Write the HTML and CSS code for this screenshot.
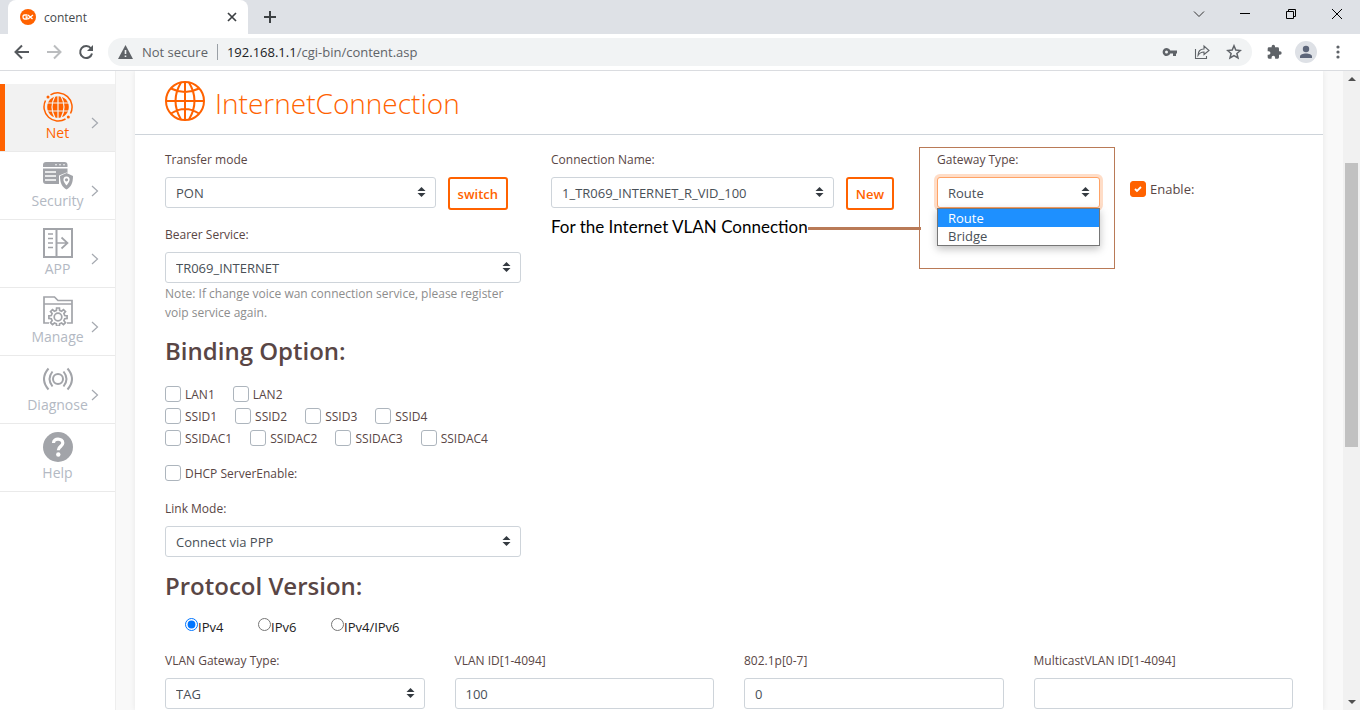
FILE: index.html
```html
<!DOCTYPE html>
<html lang="en">
<head>
<meta charset="utf-8">
<title>content</title>
<link rel="stylesheet" href="styles.css">
</head>
<body>
<svg class="defs" aria-hidden="true">
  <symbol id="carets" viewBox="0 0 8 10"><path d="M4 0L8 4H0zM4 10L0 6H8z" fill="#343a40"/></symbol>
  <symbol id="arrow" viewBox="0 0 8 12"><path d="M1 1l5.500 5L1 11" fill="none" stroke="#a5a9b0" stroke-width="1.200"/></symbol>
</svg>
<div class="browser">
  <div class="tabstrip">
    <div class="tab">
      <svg class="favicon" viewBox="0 0 16 16"><circle cx="8" cy="8" r="8" fill="#ff6200"/><path d="M7.500 6H4.500Q3 6 3 8t1.500 2H7V8H5.500M8 6l4.500 4M13 6l-5 4" fill="none" stroke="#fff" stroke-width="1.300"/></svg>
      <span class="tab-title">content</span>
      <button class="icon-btn" aria-label="Close tab"><svg width="10" height="10" viewBox="0 0 10 10"><path d="M1 1l8 8M9 1L1 9" stroke="#3c4043" stroke-width="1.700"/></svg></button>
    </div>
    <button class="icon-btn new-tab" aria-label="New tab"><svg width="12" height="12" viewBox="0 0 12 12"><path d="M6 0v12M0 6h12" stroke="#3c4043" stroke-width="2"/></svg></button>
    <div class="window-controls">
      <button class="icon-btn" aria-label="Search tabs"><svg width="12" height="12" viewBox="0 0 12 12"><path d="M1 3.500l5 5 5-5" fill="none" stroke="#333" stroke-width="1"/></svg></button>
      <button class="icon-btn" aria-label="Minimize"><svg width="12" height="12" viewBox="0 0 12 12"><path d="M1 5.500h10" stroke="#000"/></svg></button>
      <button class="icon-btn" aria-label="Restore"><svg width="12" height="12" viewBox="0 0 12 12"><path d="M1.500 3.500h7v7h-7zM3.500 3.500v-2h7v7h-2" fill="none" stroke="#000"/></svg></button>
      <button class="icon-btn" aria-label="Close"><svg width="12" height="12" viewBox="0 0 12 12"><path d="M1 1l10 10M11 1L1 11" stroke="#000" stroke-width="1"/></svg></button>
    </div>
  </div>
  <div class="toolbar">
    <button class="icon-btn" aria-label="Back"><svg width="16" height="16" viewBox="0 0 16 16"><path d="M15 8H2M8 1.500L1.500 8 8 14.500" fill="none" stroke="#55595d" stroke-width="2"/></svg></button>
    <button class="icon-btn" aria-label="Forward"><svg width="16" height="16" viewBox="0 0 16 16"><path d="M1 8h13M8 1.500L14.500 8 8 14.500" fill="none" stroke="#bbbdbf" stroke-width="2"/></svg></button>
    <button class="icon-btn" aria-label="Reload"><svg width="16" height="16" viewBox="0 0 16 16"><path d="M13 4.500A6 6 0 1 0 14 9.500" fill="none" stroke="#55595d" stroke-width="2"/><path d="M15 1v6H9z" fill="#55595d"/></svg></button>
    <div class="omnibox">
      <svg width="15" height="14" viewBox="0 0 15 14"><path d="M7.500 0L15 14H0z" fill="#5f6368"/><path d="M7.500 5v4M7.500 10.500v1.500" stroke="#f1f3f4" stroke-width="1.600"/></svg>
      <span class="not-secure">Not secure</span>
      <span class="address"><span class="host">192.168.1.1</span>/cgi-bin/content.asp</span>
      <button class="icon-btn" aria-label="Passwords"><svg width="16" height="16" viewBox="0 0 16 16"><path fill-rule="evenodd" d="M8.300 6.500H15v3h-1V12h-3V9.500H8.300A4 4 0 1 1 8.300 6.500zM4.500 6.500a1.500 1.500 0 1 0 0 3 1.500 1.500 0 0 0 0-3z" fill="#5f6368"/></svg></button>
      <button class="icon-btn" aria-label="Share"><svg width="16" height="16" viewBox="0 0 16 16"><path d="M1.500 5v9.500h11V12M4 11.500C4 7 6.500 5 10 5V2l5 4.500-5 4V8C7.500 8 5.500 9 4 11.500z" fill="none" stroke="#5f6368" stroke-width="1.100"/></svg></button>
      <button class="icon-btn" aria-label="Bookmark"><svg width="16" height="16" viewBox="0 0 16 16"><path d="M8 1.800l1.800 4.300 4.600.4-3.500 3 1.100 4.500L8 11.600 4 14l1.100-4.500-3.500-3 4.600-.4z" fill="none" stroke="#5f6368" stroke-width="1.500"/></svg></button>
    </div>
    <div class="actions">
      <button class="icon-btn" aria-label="Extensions"><svg width="16" height="16" viewBox="0 0 24 24"><path d="M21 11h-1.500V7a2 2 0 0 0-2-2h-4V3.500a2.500 2.500 0 0 0-5 0V5h-4a2 2 0 0 0-2 2v3.800H4a2.700 2.700 0 0 1 0 5.400H2.500V20a2 2 0 0 0 2 2h3.800v-1.500a2.700 2.700 0 0 1 5.400 0V22h3.800a2 2 0 0 0 2-2v-4H21a2.500 2.500 0 0 0 0-5z" fill="#5f6368"/></svg></button>
      <button class="icon-btn" aria-label="Profile"><svg width="22" height="22" viewBox="0 0 22 22"><circle cx="11" cy="11" r="11" fill="#dee1e6"/><circle cx="11" cy="8" r="3.200" fill="#5c6579"/><path d="M5 17v-1.500c0-4 12-4 12 0V17z" fill="#5c6579"/></svg></button>
      <button class="icon-btn menu-btn" aria-label="Menu"><svg width="4" height="14" viewBox="0 0 4 14"><g fill="#5f6368"><circle cx="2" cy="2" r="1.600"/><circle cx="2" cy="7" r="1.600"/><circle cx="2" cy="12" r="1.600"/></g></svg></button>
    </div>
  </div>
  <div class="viewport">
    <nav class="sidebar">
      <a class="nav-item active" href="#net">
        <svg class="nav-icon" viewBox="0 0 30 30"><g fill="none" stroke="#ff6200" stroke-width="1.500"><path d="M7.500 2.900A14.200 14.200 0 0 1 27.500 21.500M22.500 27A14.200 14.200 0 0 1 2.500 8.500"/></g><circle cx="5" cy="5" r="1.500" fill="#ff6200"/><circle cx="25.300" cy="25" r="1.500" fill="#ff6200"/><circle cx="15" cy="15" r="10.800" fill="#ff6200"/><path d="M3.500 11h23M3.500 19h23M15 3v24M12 4q-6 11 0 22M18 4q6 11 0 22" fill="none" stroke="#f2f2f2" stroke-width="1.200"/></svg>
        <span>Net</span><svg class="nav-arrow"><use href="#arrow"/></svg></a>
      <a class="nav-item" href="#security">
        <svg class="nav-icon" viewBox="0 0 30 30"><path d="M3 2h18.500a3 3 0 0 1 3 3v2H0V5a3 3 0 0 1 3-3z" fill="#a2a4a9"/><g fill="#fff"><circle cx="13" cy="4.800" r=".8"/><circle cx="17" cy="4.800" r=".8"/><circle cx="21" cy="4.800" r=".8"/></g><path d="M0 8.500h24.500V13l-1-.5-7.500 3V24H3a3 3 0 0 1-3-3z" fill="#a2a4a9"/><path d="M2 12h11M2 16h11M2 20h11" stroke="#fff" stroke-width="1.300"/><path d="M23.500 13L30 16c0 7-2 11-6.500 13.500C19 27 17 23 17 16z" fill="#a2a4a9"/><path d="M23.500 16.500c2.500 0 3.500 2 3 4-.5 2-3 5-3 5s-2.500-3-3-5c-.5-2 .5-4 3-4z" fill="#fff"/><circle cx="23.500" cy="19.800" r="1.600" fill="#a2a4a9"/></svg>
        <span>Security</span><svg class="nav-arrow"><use href="#arrow"/></svg></a>
      <a class="nav-item" href="#app">
        <svg class="nav-icon" viewBox="0 0 30 30"><path d="M1 1h28v28H1zM13.500 1v28" fill="none" stroke="#a2a4a9" stroke-width="2"/><path d="M5 6h5M5 10.500h5M5 15h5M5 19.500h5M14 15h10M18.500 9.500L24.500 15l-6 5.500" fill="none" stroke="#a2a4a9" stroke-width="1.700"/></svg>
        <span>APP</span><svg class="nav-arrow"><use href="#arrow"/></svg></a>
      <a class="nav-item" href="#manage">
        <svg class="nav-icon" viewBox="0 0 30 30"><path d="M6 27H1V1h10.500l3.500 3.500h14V27h-5M1 8h28" fill="none" stroke="#a2a4a9" stroke-width="1.700"/><g fill="none" stroke="#a2a4a9" stroke-width="1.700"><path d="M13.400 14.400L13.600 12h2.800l.2 2.400 2 .8 1.900-1.600 2 2-1.600 1.900.8 2 2.400.3v2.600l-2.400.3-.8 2 1.600 1.900-2 2-1.900-1.600-2 .8-.2 2.200h-2.800l-.2-2.200-2-.8-1.900 1.600-2-2 1.600-1.900-.8-2-2.400-.3v-2.600l2.400-.3.8-2-1.600-1.900 2-2 1.900 1.600z"/><circle cx="15" cy="21" r="3.800"/></g></svg>
        <span>Manage</span><svg class="nav-arrow"><use href="#arrow"/></svg></a>
      <a class="nav-item" href="#diagnose">
        <svg class="nav-icon" viewBox="0 0 30 30"><g fill="none" stroke="#a2a4a9" stroke-width="2"><circle cx="15" cy="15" r="5"/><path d="M9.500 7.500q-6 7.500 0 15M20.500 7.500q6 7.500 0 15M5.500 4.500q-9 10.500 0 21M24.500 4.500q9 10.500 0 21"/></g></svg>
        <span>Diagnose</span><svg class="nav-arrow"><use href="#arrow"/></svg></a>
      <a class="nav-item" href="#help">
        <svg class="nav-icon" viewBox="0 0 30 30"><circle cx="15" cy="15" r="15" fill="#a2a4a9"/><path d="M10.500 11c0-5.500 9.300-5 9.300 0 0 3.500-4.500 3.300-4.500 7.300" fill="none" stroke="#fff" stroke-width="3.200"/><circle cx="15.300" cy="22.500" r="2.200" fill="#fff"/></svg>
        <span>Help</span></a>
    </nav>
    <main class="page">
      <section class="panel">
        <header class="panel-head">
          <svg class="globe" viewBox="0 0 40 40"><g fill="none" stroke="#ff6200" stroke-width="2"><circle cx="20" cy="20" r="19"/><path d="M20 1v38M1 20h38M16 1.500q-11 18.500 0 37M24 1.500q11 18.500 0 37M6 7.500q14 7 28 0M6 32.500q14-9 28 0"/></g></svg>
          <h1>InternetConnection</h1>
        </header>
        <form class="form">
          <div class="grid">
            <div class="col-4">
              <div class="field">
                <label for="mode">Transfer mode</label>
                <div class="control-row">
                  <div class="select"><select id="mode"><option>PON</option></select><svg><use href="#carets"/></svg></div>
                  <button type="button" class="btn">switch</button>
                </div>
              </div>
              <div class="field spaced">
                <label for="bearer">Bearer Service:</label>
                <div class="select"><select id="bearer"><option>TR069_INTERNET</option></select><svg><use href="#carets"/></svg></div>
                <p class="note">Note: If change voice wan connection service, please register voip service again.</p>
              </div>
              <h2>Binding Option:</h2>
              <div class="checks">
                <div class="check-row">
                  <label><input type="checkbox">LAN1</label><label><input type="checkbox">LAN2</label>
                </div>
                <div class="check-row">
                  <label><input type="checkbox">SSID1</label><label><input type="checkbox">SSID2</label><label><input type="checkbox">SSID3</label><label><input type="checkbox">SSID4</label>
                </div>
                <div class="check-row">
                  <label><input type="checkbox">SSIDAC1</label><label><input type="checkbox">SSIDAC2</label><label><input type="checkbox">SSIDAC3</label><label><input type="checkbox">SSIDAC4</label>
                </div>
              </div>
              <div class="check-row dhcp"><label><input type="checkbox">DHCP ServerEnable:</label></div>
              <div class="field">
                <label for="link">Link Mode:</label>
                <div class="select"><select id="link"><option>Connect via PPP</option></select><svg><use href="#carets"/></svg></div>
              </div>
            </div>
            <div class="col-4">
              <div class="field">
                <label for="conn">Connection Name:</label>
                <div class="control-row">
                  <div class="select"><select id="conn"><option>1_TR069_INTERNET_R_VID_100</option></select><svg><use href="#carets"/></svg></div>
                  <button type="button" class="btn">New</button>
                </div>
              </div>
              <div class="callout"><span>For the Internet VLAN Connection</span></div>
            </div>
            <div class="col-2 gateway">
              <div class="field">
                <label for="gateway">Gateway Type:</label>
                <div class="select open"><select id="gateway"><option>Route</option><option>Bridge</option></select><svg><use href="#carets"/></svg>
                  <ul class="menu" role="listbox" aria-label="Gateway Type"><li role="option" aria-selected="true">Route</li><li role="option" aria-selected="false">Bridge</li></ul>
                </div>
              </div>
            </div>
            <div class="col-2 check-row enable"><label><input type="checkbox" checked>Enable:</label></div>
          </div>
          <h2>Protocol Version:</h2>
          <div class="radios">
            <label><input type="radio" name="ip" checked><span>IPv4</span></label>
            <label><input type="radio" name="ip"><span>IPv6</span></label>
            <label><input type="radio" name="ip"><span>IPv4/IPv6</span></label>
          </div>
          <div class="grid">
            <div class="col-3 field"><label for="vtype">VLAN Gateway Type:</label>
              <div class="select"><select id="vtype"><option>TAG</option></select><svg><use href="#carets"/></svg></div></div>
            <div class="col-3 field"><label for="vid">VLAN ID[1-4094]</label><input class="text" id="vid" type="text" value="100"></div>
            <div class="col-3 field"><label for="prio">802.1p[0-7]</label><input class="text" id="prio" type="text" value="0"></div>
            <div class="col-3 field"><label for="mvid">MulticastVLAN ID[1-4094]</label><input class="text" id="mvid" type="text"></div>
          </div>
        </form>
      </section>
    </main>
    <div class="scrollbar" aria-hidden="true">
      <svg width="8" height="5" viewBox="0 0 8 5"><path d="M4 0l4 4H0z" fill="#505050"/></svg>
      <div class="track"><div class="thumb"></div></div>
      <svg width="8" height="5" viewBox="0 0 8 5"><path d="M4 5l4-4H0z" fill="#505050"/></svg>
    </div>
  </div>
</div>
</body>
</html>
```
FILE: styles.css
```css
* { box-sizing: border-box; }
body {
  margin: 0;
  font: 13px/19px "Open Sans", "Noto Sans", sans-serif;
  color: #594645;
}
.defs { display: none; }
svg { display: block; flex: none; }
button, input, select { font: inherit; margin: 0; }
.browser { display: flex; flex-direction: column; height: 100vh; overflow: hidden; }
.icon-btn { display: flex; align-items: center; justify-content: center; border: 0; padding: 0; background: none; }

.tabstrip { display: flex; align-items: center; height: 34px; flex: none; background: #dee1e6; padding-left: 8px; }
.tab {
  display: flex; align-items: center; gap: 8px; width: 240px; height: 34px;
  padding: 0 11px 0 12px; background: #fff; border-radius: 8px 8px 0 0;
  font-size: 12px; color: #45494d;
}
.favicon { width: 16px; height: 16px; }
.tab-title { flex: 1; }
.new-tab { margin-left: 16px; }
.window-controls { display: flex; align-self: flex-start; margin-left: auto; }
.window-controls .icon-btn { width: 46px; height: 28px; }

.toolbar {
  display: flex; align-items: center; gap: 16px; height: 37px; flex: none;
  padding: 0 14px; background: #fff; border-bottom: 1px solid #dadce0;
}
.omnibox {
  display: flex; align-items: center; flex: 1; height: 28px; padding: 0 10px;
  margin: 0 -2px; border-radius: 14px; background: #f1f3f4; font-size: 13px; color: #5f6368;
}
.omnibox .icon-btn { margin-left: 16px; }
.not-secure { padding: 0 9px; border-right: 1px solid #9aa0a6; line-height: 16px; }
.address { flex: 1; padding-left: 9px; }
.host { color: #202124; }
.actions { display: flex; align-items: center; gap: 13px; }
.menu-btn { width: 16px; }

.viewport { display: flex; flex: 1; min-height: 0; background: #f9f9f9; }
.sidebar { width: 116px; flex: none; padding-top: 13px; background: #fff; border-right: 1px solid #eee; }
.nav-item {
  position: relative; display: flex; flex-direction: column; align-items: center; height: 68px;
  padding-top: 8px; border-bottom: 1px solid #eaeaea; color: #b3b9c3; font-size: 14px; line-height: 22px; text-decoration: none;
}
.nav-item.active { background: #f2f2f2; box-shadow: inset 5px 0 #ff6200; color: #ff6200; }
.nav-icon { width: 30px; height: 30px; }
.nav-arrow { position: absolute; right: 16px; top: 33px; width: 8px; height: 12px; }

.page { flex: 1; padding: 0 20px 0 19px; min-width: 0; }
.panel { height: 100%; background: #fff; box-shadow: 0 0 6px rgba(0, 0, 0, .08); clip-path: inset(0 -6px); }
.panel-head { display: flex; align-items: center; gap: 10px; height: 64px; padding: 0 30px 4px; border-bottom: 1px solid #ced4da; }
.globe { width: 40px; height: 40px; }
h1 { margin: 4px 0 0; font-size: 28px; line-height: 36px; font-weight: 300; color: #ff6200; }
.form { padding: 15px 30px 0; }
.grid { display: grid; grid-template-columns: repeat(12, minmax(0, 1fr)); column-gap: 30px; }
.col-4 { grid-column: span 4; }
.col-3 { grid-column: span 3; }
.col-2 { grid-column: span 2; }
.field { display: flex; flex-direction: column; }
.field > label { margin-bottom: 8px; font-size: 12px; }
.spaced { margin-top: 17px; }
.control-row { display: flex; gap: 12px; height: 31px; }
.control-row .select { flex: 1; }
.control-row .btn { margin-right: 13px; }
.select { position: relative; }
.select select, .text {
  display: block; width: 100%; height: 31px; padding: 1px 10px 0; border: 1px solid #ced4da; border-radius: 3px;
  background: #fff; color: #495057; appearance: none; outline: 0;
}
.select > svg { position: absolute; right: 10px; top: 10px; width: 9px; height: 10px; }
.btn { height: 33px; padding: 2px 8px 0; border: 2px solid #ff6200; border-radius: 3px; background: #fff; color: #ff6200; font-weight: 600; }
.note { margin: 1px 0 0; font-size: 12px; color: #8d8d8d; }
h2 { margin: 15px 0 18px; font-size: 24px; line-height: 28px; font-weight: 600; }
.check-row { display: flex; gap: 18px; height: 22px; align-items: center; font-size: 12px; }
.check-row label { display: flex; align-items: center; gap: 4px; }
.check-row input { width: 16px; height: 16px; border: 1px solid #adb5bd; border-radius: 3px; background: #fff; appearance: none; }
.check-row input:checked {
  border-color: #ff6200;
  background: url("data:image/svg+xml,%3Csvg xmlns='http://www.w3.org/2000/svg' viewBox='0 0 14 14'%3E%3Cpath d='M4 7l2 2 4-4' fill='none' stroke='white' stroke-width='1.800'/%3E%3C/svg%3E") #ff6200;
}
.dhcp { margin: 13px 0 15px; }
.enable { height: 22px; margin-top: 28px; font-size: 13px; }
.callout {
  display: flex; align-items: center; margin: 8px -14px 0 0; color: #000;
  font: 17px/22px Lato, sans-serif; white-space: nowrap;
}
.callout::after { content: ""; flex: 1; height: 3px; margin-top: 2px; background: #b97a57; }
.gateway { position: relative; }
.gateway::before {
  content: ""; position: absolute; left: -18px; right: -15px; top: -3px; height: 120px; border: 1px solid #b97a57;
}
.open select { border-color: #ffa366; box-shadow: 0 0 0 3px rgba(255, 98, 0, .22); }
.menu {
  position: absolute; left: 0; right: 0; top: 31px; margin: 0; padding: 0; list-style: none;
  border: 1px solid #767676; background: #fff; color: #495057; box-shadow: 0 3px 8px rgba(0, 0, 0, .25);
}
.menu li { padding: 0 10px; line-height: 18px; }
.menu li[aria-selected="true"] { background: #1e90ff; color: #fff; }
.radios { display: flex; padding-left: 20px; margin-bottom: 11px; color: #222; }
.radios label { display: flex; min-width: 73px; height: 22px; }
.radios input { width: 13px; height: 13px; }

.scrollbar { display: flex; flex-direction: column; align-items: center; justify-content: space-between; width: 17px; flex: none; padding: 6px 0; background: #f1f1f1; }
.track { flex: 1; width: 13px; padding-top: 81px; }
.thumb { height: 53%; background: #c1c1c1; }
```
